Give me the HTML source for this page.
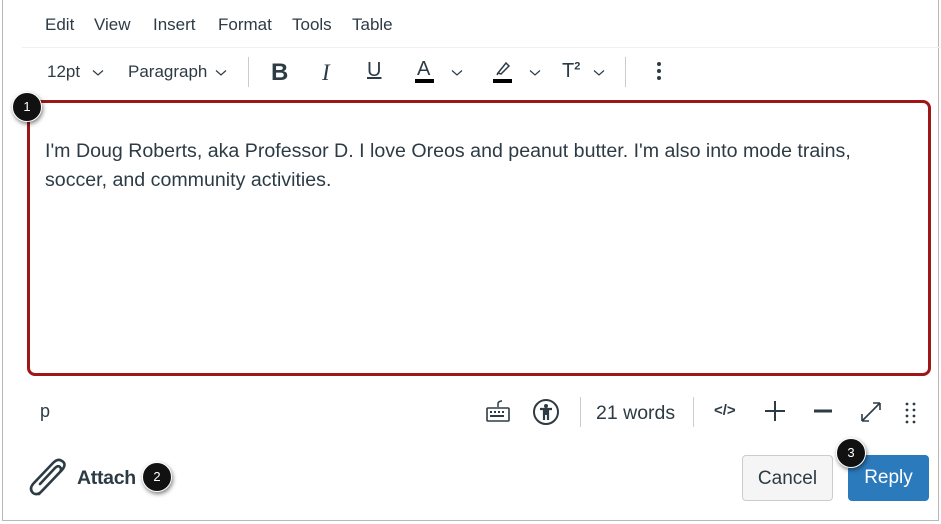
<!DOCTYPE html>
<html><head><style>
*{margin:0;padding:0;box-sizing:border-box}
body{width:941px;height:524px;background:#fff;font-family:"Liberation Sans",sans-serif;color:#2d3b45;position:relative;overflow:hidden}
.frame{position:absolute;left:2px;top:0;width:937px;height:521px;border:1px solid #b8b8b8;border-top:none}
.a{position:absolute;white-space:nowrap}
.menu{top:15px;font-size:17px}
.tb{top:62px;font-size:17px}
.sep{position:absolute;width:1px;background:#c7cdd1}
.red{position:absolute;left:27px;top:100px;width:904px;height:276px;border:3px solid #9e1616;border-radius:8px}
.badge{position:absolute;width:30px;height:30px;border-radius:50%;background:#111;color:#fff;font-size:13px;text-align:center;line-height:28px;box-shadow:1px 2px 4px rgba(0,0,0,.5);border:1.5px solid #fff}
.btn{position:absolute;border-radius:4px;font-size:19px;text-align:center;line-height:45px}
.cv{position:absolute;top:69px}
</style></head><body>
<div class="frame"></div>
<div class="a menu" style="left:45px">Edit</div>
<div class="a menu" style="left:94px">View</div>
<div class="a menu" style="left:153px">Insert</div>
<div class="a menu" style="left:218px">Format</div>
<div class="a menu" style="left:292px">Tools</div>
<div class="a menu" style="left:352px">Table</div>
<div style="position:absolute;left:22px;top:47px;width:919px;height:1px;background:#eef0f1"></div>
<div class="a tb" style="left:47px">12pt</div>
<div class="a tb" style="left:128px">Paragraph</div>
<svg width="0" height="0" style="position:absolute"><defs><symbol id="c" viewBox="0 0 12 8"><path d="M1 1.5 L6 6 L11 1.5" stroke="#2d3b45" stroke-width="1.2" fill="none"/></symbol></defs></svg>
<svg class="cv" style="left:92px" width="12" height="8"><use href="#c"/></svg>
<svg class="cv" style="left:215px" width="12" height="8"><use href="#c"/></svg>
<svg class="cv" style="left:451px" width="12" height="8"><use href="#c"/></svg>
<svg class="cv" style="left:529px" width="12" height="8"><use href="#c"/></svg>
<svg class="cv" style="left:593px" width="12" height="8"><use href="#c"/></svg>
<div class="sep" style="left:248px;top:57px;height:30px"></div>
<div class="a" style="left:271px;top:59px;font-size:24px;font-weight:bold">B</div>
<div class="a" style="left:322px;top:60px;font-size:23px;font-family:'Liberation Serif',serif;font-style:italic">I</div>
<div class="a" style="left:367px;top:59px;font-size:20px;text-decoration:underline">U</div>
<div class="a" style="left:417px;top:58px;font-size:20px">A</div>
<div style="position:absolute;left:415px;top:79px;width:19px;height:4px;background:#000"></div>
<svg class="a" style="left:493px;top:60px" width="20" height="16"><path d="M5 13 L13 3 L16 6 L8 14 Z M5 13 L4 15" stroke="#2d3b45" stroke-width="1.5" fill="none"/></svg>
<div style="position:absolute;left:493px;top:79px;width:19px;height:4px;background:#000"></div>
<div class="a" style="left:562px;top:60px;font-size:20px">T<sup style="font-size:11px;font-weight:bold">2</sup></div>
<div class="sep" style="left:625px;top:57px;height:30px"></div>
<svg class="a" style="left:655px;top:61px" width="8" height="22"><circle cx="4" cy="3" r="2" fill="#2d3b45"/><circle cx="4" cy="10" r="2" fill="#2d3b45"/><circle cx="4" cy="17" r="2" fill="#2d3b45"/></svg>
<div class="red"></div>
<div class="badge" style="left:12px;top:92px">1</div>
<div class="a" style="left:45px;top:137px;font-size:19.6px;line-height:29px">I'm Doug Roberts, aka Professor D. I love Oreos and peanut butter. I'm also into mode trains,<br>soccer, and community activities.</div>
<div class="a" style="left:40px;top:401px;font-size:18px">p</div>
<svg class="a" style="left:485px;top:398px" width="26" height="26"><path d="M13 9 V6 Q13 3 17 3" stroke="#2d3b45" stroke-width="1.5" fill="none"/><rect x="2" y="10" width="22" height="13" rx="1" stroke="#2d3b45" stroke-width="1.6" fill="none"/><g fill="#2d3b45"><rect x="5" y="13" width="2" height="2"/><rect x="9" y="13" width="2" height="2"/><rect x="13" y="13" width="2" height="2"/><rect x="17" y="13" width="2" height="2"/><rect x="5" y="17" width="14" height="2"/></g></svg>
<svg class="a" style="left:532px;top:398px" width="28" height="28"><circle cx="14" cy="14" r="12" stroke="#2d3b45" stroke-width="2" fill="none"/><circle cx="14" cy="8" r="2" fill="#2d3b45"/><path d="M8 11 H20 M14 11 V17 M12 12 V22 M16 12 V22" stroke="#2d3b45" stroke-width="2.2"/></svg>
<div class="sep" style="left:580px;top:397px;height:30px"></div>
<div class="a" style="left:596px;top:402px;font-size:19.5px">21 words</div>
<div class="sep" style="left:693px;top:397px;height:30px"></div>
<div class="a" style="left:714px;top:402px;font-size:15px;font-weight:bold">&lt;/&gt;</div>
<svg class="a" style="left:764px;top:400px" width="22" height="22"><path d="M11 1 V21 M1 11 H21" stroke="#2d3b45" stroke-width="2"/></svg>
<svg class="a" style="left:812px;top:400px" width="22" height="22"><path d="M2 11 H20" stroke="#2d3b45" stroke-width="3"/></svg>
<svg class="a" style="left:859px;top:400px" width="24" height="24"><path d="M3 21 L21 3 M3 21 V14 M3 21 H10 M21 3 V10 M21 3 H14" stroke="#2d3b45" stroke-width="1.6" fill="none"/></svg>
<svg class="a" style="left:905px;top:402px" width="12" height="22"><g fill="#2d3b45"><circle cx="2" cy="2" r="1.4"/><circle cx="9" cy="2" r="1.4"/><circle cx="2" cy="8" r="1.4"/><circle cx="9" cy="8" r="1.4"/><circle cx="2" cy="14" r="1.4"/><circle cx="9" cy="14" r="1.4"/><circle cx="2" cy="20" r="1.4"/><circle cx="9" cy="20" r="1.4"/></g></svg>
<svg class="a" style="left:28px;top:458px" width="44" height="40"><path d="M11 36 L34 12 Q39 6 34 3 Q30 0 25 5 L5 26 Q1 31 5 35 Q9 38 14 33 L32 14 Q34 11 32 9 Q30 7 27 10 L12 26" stroke="#2d3b45" stroke-width="2.6" fill="none" stroke-linecap="round"/></svg>
<div class="a" style="left:77px;top:467px;font-size:19.5px;font-weight:bold;letter-spacing:-0.3px">Attach</div>
<div class="badge" style="left:142px;top:462px">2</div>
<div class="btn" style="left:742px;top:455px;width:91px;height:46px;background:#f5f5f5;border:1px solid #c7cdd1">Cancel</div>
<div class="btn" style="left:848px;top:455px;width:81px;height:46px;background:#2b7abc;color:#fff">Reply</div>
<div class="badge" style="left:836px;top:438px">3</div>
</body></html>
